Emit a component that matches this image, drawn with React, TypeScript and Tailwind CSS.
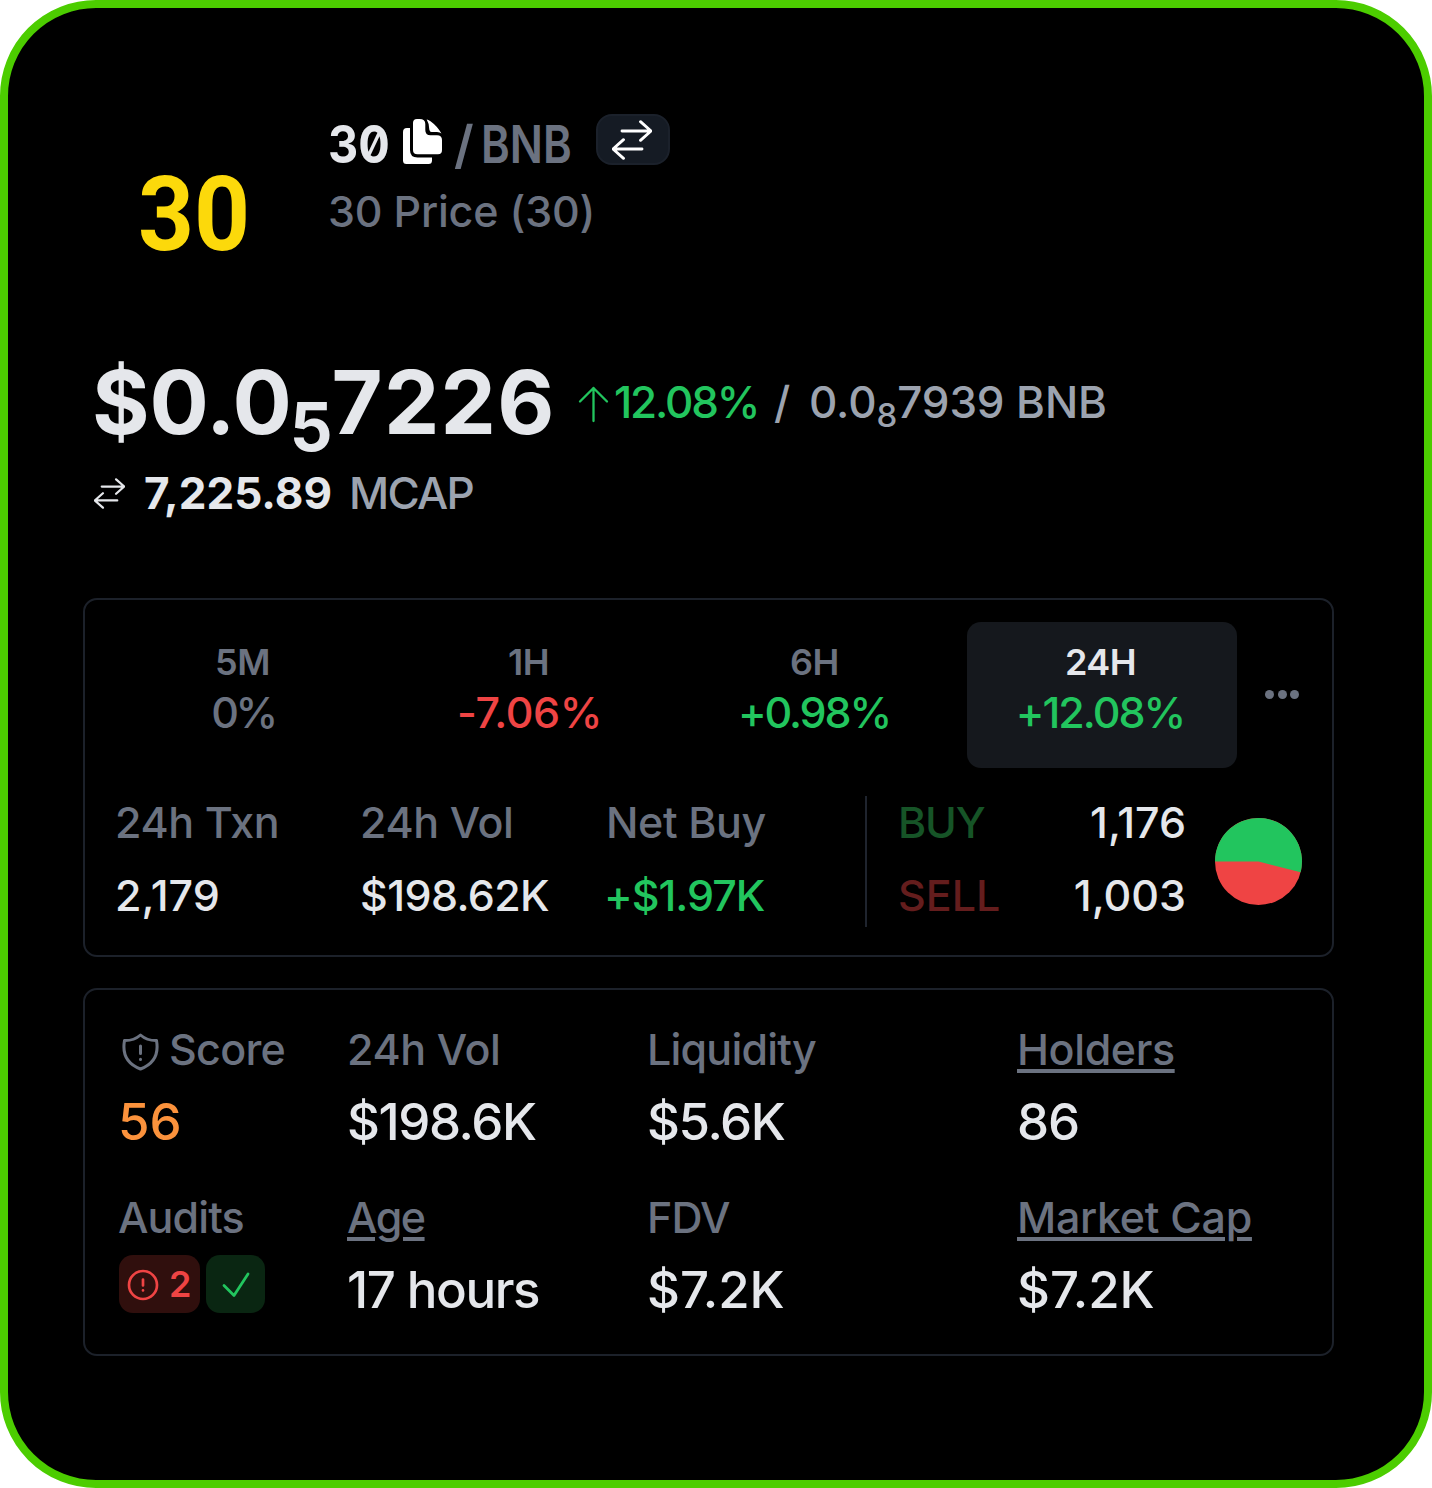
import clsx from "clsx";

const periods = [
  { label: "5M", value: "0%", tone: "text-[#6b7280]", tracking: "tracking-[-3.5px] pr-[2px]" },
  { label: "1H", value: "-7.06%", tone: "text-[#ef4444]", tracking: "tracking-[-0.4px] pr-[1px]" },
  { label: "6H", value: "+0.98%", tone: "text-[#22c55e]", tracking: "tracking-[-2.1px] pr-[4px]" },
  { label: "24H", value: "+12.08%", tone: "text-[#22c55e]", tracking: "tracking-[-2px] pr-[4px]", active: true },
];

const volumes = [
  { label: "24h Txn", value: "2,179", tone: "text-[#e5e7eb]", width: "w-[245px]" },
  { label: "24h Vol", value: "$198.62K", tone: "text-[#e5e7eb] tracking-[-0.6px]", width: "w-[246px]" },
  { label: "Net Buy", value: "+$1.97K", tone: "-ml-0.5 text-[#22c55e] tracking-[-1px]", width: "w-[259px]" },
];

function SwapIcon({ className }: { className?: string }) {
  return (
    <svg viewBox="0 0 40 40" fill="none" stroke="currentColor" strokeWidth="2.9" strokeLinecap="round" strokeLinejoin="round" className={className}>
      <path d="M10 11H38.5M28.5 1.7L39 11L28.5 20.3" />
      <path d="M30 29H1.5M11.5 19.7L1 29L11.5 38.3" />
    </svg>
  );
}

function CopyIcon() {
  return (
    <svg viewBox="0 0 40 46" className="h-[46px] w-10" fill="white">
      <path d="M4 9H7V31Q7 38.5 14.500 38.500H29V41.500Q29 45 25.500 45H3.500Q0 45 0 41.500V13Q0 9 4 9Z" />
      <path d="M14 0H16.500Q22.300 0 22.300 5V11Q22.300 16.300 27.500 16.300H34Q39 16.300 39 21V31Q39 35.300 35 35.300H14.500Q10 35.300 10 31V4Q10 0 14 0Z" />
      <path d="M23.700 0.600Q25 0.500 27.500 2.300Q34 7 38.500 14.500Q37 13.300 34 13H28.500Q26.700 13 26.300 10.500Q26.200 4.500 23.700 0.600Z" />
    </svg>
  );
}

function ShieldIcon() {
  return (
    <svg viewBox="0 0 38 38" fill="none" stroke="currentColor" strokeWidth="3" strokeLinecap="round" strokeLinejoin="round" className="ml-[3px] mt-[5px] h-[38px] w-[38px] shrink-0">
      <path d="M18.500 2C14 6 8 7.700 2.500 7.600C0.500 19 3.500 30.500 18.500 36C33.500 30.500 36.500 19 34.500 7.600C29 7.700 23 6 18.500 2Z" />
      <path d="M18.500 13V20.500M18.500 26.300V26.400" />
    </svg>
  );
}

function Header() {
  return (
    <div className="flex h-[200px]">
      <div className="flex h-[200px] w-[200px] scale-x-[0.94] items-center justify-center pt-0.5 font-['Roboto'] text-[104px] font-bold leading-none text-[#fcd90b]">
        30
      </div>
      <div className="ml-[34px]">
        <div className="flex h-[60px] text-[52px] font-semibold leading-[62px]">
          <span className="w-[75px] origin-left scale-x-[0.9] font-bold text-[#e5e7eb] [font-feature-settings:'zero']">30</span>
          <div className="mt-[5px] w-[51px]">
            <CopyIcon />
          </div>
          <span className="w-[27px] text-[#6b7280]">/</span>
          <span className="w-[115px] origin-left scale-x-[0.84] text-[#6b7280]">BNB</span>
          <div className="flex h-[51px] w-[74px] items-center justify-center rounded-[16px] border-2 border-[#1b212b] bg-[#151b24] text-white">
            <SwapIcon className="mr-0.5 h-10 w-10" />
          </div>
        </div>
        <div className="mt-[11px] text-[43px] font-[450] leading-[52px] tracking-[-0.2px] text-[#6b7280]">30 Price (30)</div>
      </div>
    </div>
  );
}

function Price() {
  return (
    <div>
      <div className="flex h-24 whitespace-nowrap leading-[96px]">
        <div className="-ml-0.5 w-[486px] text-[88px] font-bold tracking-[-0.2px] text-[#e5e7eb]">
          $0.0<span className="-ml-0.5 align-[-17px] text-[67px] leading-none tracking-[-1px]">5</span>
          <span className="tracking-[1.2px]">7226</span>
        </div>
        <svg viewBox="0 0 31 37" fill="none" stroke="#22c55e" strokeWidth="2.300" strokeLinecap="round" strokeLinejoin="round" className="mr-[5px] mt-8 h-[37px] w-[31px]">
          <path d="M15.500 35V2M2 15.500L15.500 2L29 15.500" />
        </svg>
        <span className="w-[160px] text-[44px] font-medium tracking-[-2.2px] text-[#22c55e]">12.08%</span>
        <span className="w-[35px] text-[44px] font-[450] text-[#9ca3af]">/</span>
        <span className="text-[44px] font-[450] tracking-[-0.1px] text-[#9ca3af]">
          0.0<span className="align-[-9px] text-[33px] leading-none">8</span>7939 BNB
        </span>
      </div>
      <div className="mt-4 flex h-[52px] text-[44px] leading-[54px]">
        <SwapIcon className="mt-3 h-[31px] w-[31px] text-[#e5e7eb]" />
        <span className="ml-[19px] w-[205px] font-bold text-[#e5e7eb]">7,225.89</span>
        <span className="font-[450] tracking-[-1.7px] text-[#9ca3af]">MCAP</span>
      </div>
    </div>
  );
}

function Activity() {
  return (
    <section className="h-[359px] rounded-[14px] border-2 border-[#1c212a] pt-[22px]">
      <div className="flex gap-4 pl-[24px]">
        {periods.map((p) => (
          <div key={p.label} className={clsx("h-[146px] w-[270px] rounded-[14px] pt-[18px] text-center", p.active && "bg-[#15181d]")}>
            <div className={clsx("pr-[3px] text-[36px] font-semibold leading-[44px] tracking-[-0.5px]", p.active ? "text-[#e5e7eb]" : "text-[#6b7280]")}>{p.label}</div>
            <div className={clsx("mt-0.5 text-[43px] font-medium leading-[52px]", p.tone, p.tracking)}>{p.value}</div>
          </div>
        ))}
        <div className="ml-3 flex h-[144px] items-center gap-[3.5px]">
          <span className="h-[9px] w-[9px] rounded-full bg-[#6b7280]" />
          <span className="h-[9px] w-[9px] rounded-full bg-[#6b7280]" />
          <span className="h-[9px] w-[9px] rounded-full bg-[#6b7280]" />
        </div>
      </div>
      <div className="mt-7 flex h-[131px] pl-[30px] text-[43px] leading-[52px]">
        {volumes.map((v) => (
          <div key={v.label} className={v.width}>
            <div className="font-[450] tracking-[-0.4px] text-[#6b7280]">{v.label}</div>
            <div className={clsx("mt-[21px] font-medium", v.tone)}>{v.value}</div>
          </div>
        ))}
        <div className="flex border-l-2 border-[#1f242e] pl-[31px]">
          <div className="w-[120px] font-[450]">
            <div className="tracking-[-1.2px] text-[#165427]">BUY</div>
            <div className="mt-[21px] text-[#641d1d]">SELL</div>
          </div>
          <div className="w-[168px] text-right font-medium text-[#e5e7eb]">
            <div>1,176</div>
            <div className="mt-[21px]">1,003</div>
          </div>
          <svg viewBox="0 0 88 88" className="ml-[29px] mt-[21px] h-[88px] w-[88px]">
            <circle cx="43.500" cy="44.500" r="43.500" fill="#ef4444" />
            <path d="M43.500 44.500H0A43.500 43.500 0 1 1 85.650 55.200Z" fill="#22c55e" />
          </svg>
        </div>
      </div>
    </section>
  );
}

type StatProps = {
  label: string;
  value: string;
  linked?: boolean;
  labelTracking?: string;
  tracking?: string;
  className?: string;
};

function Stat({ label, value, linked, labelTracking = "tracking-[-0.4px]", tracking, className }: StatProps) {
  return (
    <div className={className}>
      <div className={clsx("text-[43px] font-[450] leading-[52px] text-[#6b7280]", labelTracking, linked && "underline decoration-[4px] underline-offset-[4px]")}>{label}</div>
      <div className={clsx("mt-[17px] text-[51px] font-medium leading-[60px] text-[#e5e7eb]", tracking)}>{value}</div>
    </div>
  );
}

function Stats() {
  return (
    <section className="mt-[31px] h-[368px] rounded-[14px] border-2 border-[#1c212a] pl-[34px] pt-[33px]">
      <div className="flex h-[128px]">
        <div className="w-[228px]">
          <div className="flex items-center text-[43px] font-[450] leading-[52px] tracking-[-0.7px] text-[#6b7280]">
            <ShieldIcon />
            <span className="ml-[9px]">Score</span>
          </div>
          <div className="-ml-px mt-[17px] text-[51px] font-medium leading-[60px] text-[#fb923c]">56</div>
        </div>
        <Stat className="w-[300px]" label="24h Vol" value="$198.6K" tracking="tracking-[-1.4px]" />
        <Stat className="w-[370px]" label="Liquidity" value="$5.6K" labelTracking="tracking-[-0.8px]" tracking="tracking-[-1.4px]" />
        <Stat label="Holders" value="86" linked tracking="tracking-[-1px]" />
      </div>
      <div className="mt-10 flex h-[128px]">
        <div className="w-[228px]">
          <div className="-ml-px text-[43px] font-[450] leading-[52px] tracking-[-0.9px] text-[#6b7280]">Audits</div>
          <div className="mt-3 flex gap-1.5">
            <div className="flex h-[58px] w-[81px] items-center rounded-[14px] bg-[#300f0d] pl-2 text-[#ef4444]">
              <svg viewBox="0 0 32 32" fill="none" stroke="currentColor" strokeWidth="2.700" strokeLinecap="round" className="mt-0.5 h-8 w-8">
                <circle cx="16" cy="16" r="14" />
                <path d="M16 10.500V16.500M16 21.300V21.400" />
              </svg>
              <span className="ml-[10px] text-[36px] font-semibold leading-[58px]">2</span>
            </div>
            <div className="flex h-[58px] w-[59px] items-center justify-center rounded-[14px] bg-[#0a2612]">
              <svg viewBox="0 0 30 28" fill="none" stroke="#22c55e" strokeWidth="2.800" strokeLinecap="round" strokeLinejoin="round" className="mt-0.5 h-7 w-[30px]">
                <path d="M3 14.500L13 24.500L27 3" />
              </svg>
            </div>
          </div>
        </div>
        <Stat className="w-[300px]" label="Age" value="17 hours" linked labelTracking="tracking-[-1.5px]" tracking="tracking-[-1.4px]" />
        <Stat className="w-[370px]" label="FDV" value="$7.2K" labelTracking="tracking-[-0.9px]" />
        <Stat label="Market Cap" value="$7.2K" linked labelTracking="tracking-[-0.3px]" />
      </div>
    </section>
  );
}

export default function App() {
  return (
    <div className="bg-white">
      <main className="h-[1488px] w-[1432px] overflow-hidden whitespace-nowrap rounded-[96px] border-8 border-[#4ccd00] bg-black px-[75px] pt-[106px] font-['Inter',sans-serif]">
        <div className="pl-[11px]">
          <Header />
          <div className="mt-10">
            <Price />
          </div>
        </div>
        <div className="mt-20 w-[1251px]">
          <Activity />
          <Stats />
        </div>
      </main>
    </div>
  );
}
